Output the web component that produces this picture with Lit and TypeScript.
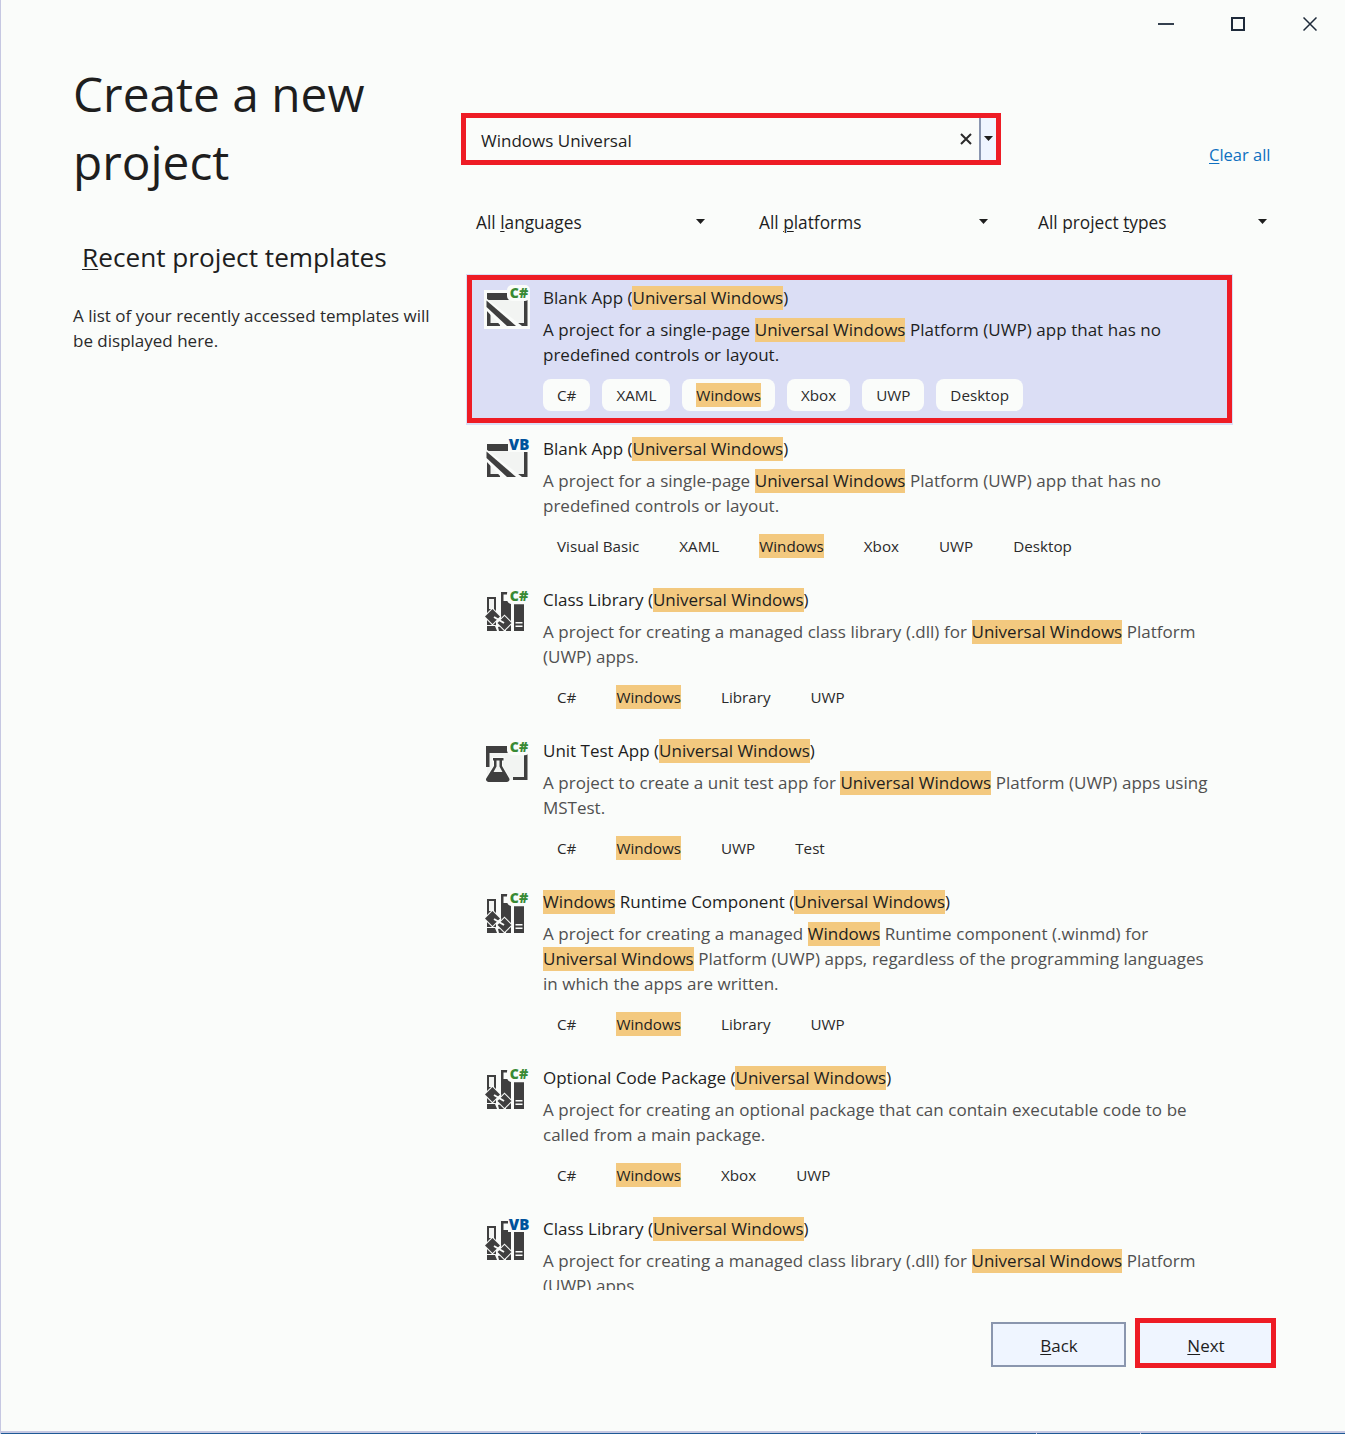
import { LitElement, html, svg, css } from 'lit';
import { customElement } from 'lit/decorators.js';

interface Template {
  icon: 'blank' | 'lib' | 'test';
  lang: 'C#' | 'VB';
  title: string;
  desc: string[];
  tags: string[];
  selected?: boolean;
}

// [[...]] marks the search hit in a string
const templates: Template[] = [
  {
    icon: 'blank',
    lang: 'C#',
    selected: true,
    title: 'Blank App ([[Universal Windows]])',
    desc: [
      'A project for a single-page [[Universal Windows]] Platform (UWP) app that has no',
      'predefined controls or layout.',
    ],
    tags: ['C#', 'XAML', '[[Windows]]', 'Xbox', 'UWP', 'Desktop'],
  },
  {
    icon: 'blank',
    lang: 'VB',
    title: 'Blank App ([[Universal Windows]])',
    desc: [
      'A project for a single-page [[Universal Windows]] Platform (UWP) app that has no',
      'predefined controls or layout.',
    ],
    tags: ['Visual Basic', 'XAML', '[[Windows]]', 'Xbox', 'UWP', 'Desktop'],
  },
  {
    icon: 'lib',
    lang: 'C#',
    title: 'Class Library ([[Universal Windows]])',
    desc: [
      'A project for creating a managed class library (.dll) for [[Universal Windows]] Platform',
      '(UWP) apps.',
    ],
    tags: ['C#', '[[Windows]]', 'Library', 'UWP'],
  },
  {
    icon: 'test',
    lang: 'C#',
    title: 'Unit Test App ([[Universal Windows]])',
    desc: [
      'A project to create a unit test app for [[Universal Windows]] Platform (UWP) apps using',
      'MSTest.',
    ],
    tags: ['C#', '[[Windows]]', 'UWP', 'Test'],
  },
  {
    icon: 'lib',
    lang: 'C#',
    title: '[[Windows]] Runtime Component ([[Universal Windows]])',
    desc: [
      'A project for creating a managed [[Windows]] Runtime component (.winmd) for',
      '[[Universal Windows]] Platform (UWP) apps, regardless of the programming languages',
      'in which the apps are written.',
    ],
    tags: ['C#', '[[Windows]]', 'Library', 'UWP'],
  },
  {
    icon: 'lib',
    lang: 'C#',
    title: 'Optional Code Package ([[Universal Windows]])',
    desc: [
      'A project for creating an optional package that can contain executable code to be',
      'called from a main package.',
    ],
    tags: ['C#', '[[Windows]]', 'Xbox', 'UWP'],
  },
  {
    icon: 'lib',
    lang: 'VB',
    title: 'Class Library ([[Universal Windows]])',
    desc: [
      'A project for creating a managed class library (.dll) for [[Universal Windows]] Platform',
      '(UWP) apps.',
    ],
    tags: ['C#', '[[Windows]]', 'Library', 'UWP'],
  },
];

const hits = (text: string) =>
  text
    .split(/(\[\[.*?\]\])/)
    .map(part =>
      part.startsWith('[[')
        ? html`<span class="hit">${part.slice(2, -2)}</span>`
        : part,
    );

const DARK = '#3f3f3f';
const PAGE = '#fafcfa';
const LIGHT = '#f2f4f2';

const badge = (lang: string, baseline: number) => svg`
  ${lang === 'C#'
    ? svg`<rect x="23" y=${baseline - 12.5} width="23" height="16" rx="5" fill=${PAGE} />`
    : svg`<rect x="24" y="-1" width="22" height="14" fill=${PAGE} />`}
  <text
    x="35"
    y=${baseline}
    text-anchor="middle"
    font-family="Open Sans, sans-serif"
    font-weight="800"
    font-size=${lang === 'C#' ? 14 : 15}
    fill=${lang === 'C#' ? '#388a34' : '#00539c'}
  >${lang}</text>
`;

const blankIcon = (lang: string, selected: boolean) => svg`
  <svg class="icon" viewBox="0 -6 46 48" width="46" height="48">
    ${selected ? svg`<rect x="0" y="2" width="46" height="39" fill=${PAGE} />` : ''}
    <rect x="3" y="5" width="40" height="33" fill=${LIGHT} />
    <rect x="3" y="5" width="37" height="7" fill=${DARK} />
    <path d="M40 10h3.500v28H33v-3h7z" fill=${DARK} />
    <path d="M3 18h3.500v17H16v3H3z" fill=${DARK} />
    <path d="M2 10L38 38H17L2 22z" fill=${PAGE} />
    <path d="M2.500 12.500L32 38H23L2.500 19z" fill=${DARK} />
    ${badge(lang, lang === 'C#' ? 9.500 : 11)}
  </svg>
`;

const libIcon = (lang: string) => svg`
  <svg class="icon" viewBox="0 -6 46 48" width="46" height="48">
    <path d="M3 7h9v34H3z" fill=${DARK} />
    <rect x="5" y="9" width="5" height="10" fill=${LIGHT} />
    <path d="M17 2h9v2.500h-6.500V11H27v30H17z" fill=${DARK} />
    <path d="M30 13h10v28H30z" fill=${DARK} />
    <rect x="31.500" y="32" width="7" height="1.500" fill=${PAGE} />
    <rect x="31.500" y="35.500" width="7" height="1.500" fill=${PAGE} />
    <g stroke=${PAGE} stroke-width="2" paint-order="stroke" fill=${DARK}>
      <path d="M3 36h8l2 5H3z" />
      <path d="M14 37l4 -1 3 5h-6z" />
      <path d="M8.500 19l7.500 7.500 -7.500 7.500 -7.500 -7.500z" />
      <path d="M20.500 26l7 7 -7 7 -7 -7z" />
    </g>
    <path d="M10 27l10 6" stroke=${PAGE} stroke-width="2" />
    ${badge(lang, 10.700)}
  </svg>
`;

const testIcon = (lang: string) => svg`
  <svg class="icon" viewBox="0 -6 46 48" width="46" height="48">
    <rect x="3" y="5" width="40" height="34" fill=${LIGHT} />
    <rect x="2" y="5" width="38" height="7" fill=${DARK} />
    <path d="M40 10h3.500v29H29v-3h11z" fill=${DARK} />
    <rect x="2" y="12" width="3.500" height="14" fill=${DARK} />
    <path
      d="M9 17h10.500v2.500h-1.500v5.500L25 37a2.500 2.500 0 0 1-2 4H4.500a2.500 2.500 0 0 1-2-4L10 25v-5.500H9z"
      fill=${DARK}
      stroke=${PAGE}
      stroke-width="2"
      paint-order="stroke"
    />
    <path d="M12.500 19.500h3v6l3 5.500H9.500l3-5.500z" fill=${LIGHT} />
    ${badge(lang, 10.700)}
  </svg>
`;

const caret = svg`
  <svg class="caret" viewBox="0 0 9 5" width="9" height="5"><path d="M0 0h9L4.500 5z" fill="#1e1e1e" /></svg>
`;

@customElement('app-root')
export class AppRoot extends LitElement {
  static styles = css`
    :host {
      display: block;
      font-family: 'Open Sans', 'Noto Sans', sans-serif;
      color: #1e1e1e;
    }
    .window {
      width: 1345px;
      height: 1434px;
      box-sizing: border-box;
      display: flex;
      flex-direction: column;
      background: #fafcfa;
      border-left: 1px solid #c6c8e2;
      overflow: hidden;
    }
    .titlebar {
      height: 48px;
      flex: none;
      display: flex;
      justify-content: flex-end;
      gap: 2px;
    }
    .winbtn {
      width: 70px;
      height: 48px;
      display: flex;
      align-items: center;
      justify-content: center;
    }
    .body {
      flex: 1;
      display: grid;
      grid-template-columns: 460px 1fr;
      min-height: 0;
    }
    aside {
      padding-left: 72px;
    }
    h1 {
      margin: 12px 0 0;
      font-size: 47.800px;
      font-weight: 400;
      line-height: 68px;
    }
    h2 {
      margin: 44px 0 0 9px;
      font-size: 26.200px;
      font-weight: 400;
      line-height: 34px;
      white-space: nowrap;
    }
    .recent {
      margin: 29px 0 0;
      font-size: 17px;
      line-height: 25px;
      white-space: nowrap;
      color: #2a2a2a;
    }
    main {
      min-width: 0;
    }
    .search-row {
      margin-top: 65px;
      height: 52px;
      display: flex;
      align-items: flex-start;
    }
    .search {
      width: 540px;
      height: 52px;
      box-sizing: border-box;
      border: 5px solid #ee1c25;
      display: flex;
      align-items: center;
      font-size: 17px;
    }
    .search-text {
      flex: 1;
      padding: 3px 0 0 15px;
      white-space: nowrap;
    }
    .clear {
      width: 26px;
      display: flex;
      justify-content: center;
    }
    .search-drop {
      width: 15px;
      height: 100%;
      border-left: 2px solid #8a96b0;
      background: #eff5ff;
      display: flex;
      align-items: center;
      justify-content: center;
    }
    .clear-all {
      margin: 30px 0 0 208px;
      font-size: 16.500px;
      line-height: 24px;
      color: #0e70c0;
      white-space: nowrap;
    }
    .filters {
      margin-top: 33px;
      display: flex;
      gap: 38px;
      padding-left: 4px;
      height: 47px;
    }
    .filter {
      width: 245px;
      box-sizing: border-box;
      padding: 1px 5px 0 11px;
      display: flex;
      align-items: center;
      justify-content: space-between;
      font-size: 17.300px;
      white-space: nowrap;
    }
    .filter + .filter + .filter {
      margin-left: -4px;
    }
    .caret {
      flex: none;
      margin-bottom: 2px;
    }
    .list {
      margin: 29px 0 0 5px;
      width: 767px;
      height: 1016px;
      overflow: hidden;
    }
    .row {
      position: relative;
      display: flex;
      gap: 13px;
      padding: 11px 0 14px 18px;
    }
    .row.selected {
      background: #dbdef5;
    }
    .row.selected::after {
      content: '';
      position: absolute;
      inset: 1px 1px 2px;
      border: 5px solid #ee1c25;
      pointer-events: none;
    }
    .icon {
      display: block;
      flex: none;
      margin-top: -3px;
    }
    .info {
      min-width: 0;
      font-size: 17px;
      line-height: 25px;
      white-space: nowrap;
    }
    .title {
      color: #1e1e1e;
    }
    .desc {
      margin-top: 7px;
      color: #505050;
      word-spacing: 0.200px;
    }
    .selected .desc {
      color: #1e1e1e;
    }
    .hit {
      display: inline-block;
      background: #f3c97f;
      line-height: 24px;
      color: #1e1e1e;
      word-spacing: 0;
    }
    .tags {
      margin-top: 12px;
      display: flex;
      gap: 12px;
    }
    .tag {
      height: 32px;
      padding: 0 14px;
      display: flex;
      align-items: center;
      border-radius: 8px;
      font-size: 15.200px;
      color: #2a2a2a;
    }
    .selected .tag {
      background: #fafcfa;
    }
    .actions {
      margin-top: 28px;
      padding-right: 69px;
      display: flex;
      justify-content: flex-end;
      align-items: flex-start;
      gap: 9px;
    }
    .btn {
      box-sizing: border-box;
      display: flex;
      align-items: center;
      justify-content: center;
      padding-top: 1px;
      background: #eff5ff;
      font-size: 17px;
    }
    .back {
      width: 135px;
      height: 45px;
      margin-top: 4px;
      padding-left: 1px;
      border: 2px solid #8a96ae;
    }
    .next {
      width: 141px;
      height: 50px;
      padding-top: 4px;
      padding-left: 1px;
      border: 5px solid #ee1c25;
    }
    .status {
      flex: none;
      height: 3px;
      display: flex;
      gap: 1px;
      background: #c6c8e2;
      align-items: flex-end;
    }
    .status span {
      height: 1px;
      background: #1e5a96;
    }
    .status span:first-child {
      width: 1035px;
    }
    .status span:nth-child(2) {
      width: 103px;
    }
    .status span:last-child {
      flex: 1;
    }
    u {
      text-underline-offset: 2px;
      text-decoration-thickness: 1px;
    }
  `;

  private renderIcon(t: Template) {
    if (t.icon === 'lib') return libIcon(t.lang);
    if (t.icon === 'test') return testIcon(t.lang);
    return blankIcon(t.lang, !!t.selected);
  }

  render() {
    return html`
      <div class="window">
        <div class="titlebar">
          <div class="winbtn">
            <svg width="16" height="2"><rect width="16" height="2" fill="#34404e" /></svg>
          </div>
          <div class="winbtn">
            <svg width="14" height="14">
              <rect x="1" y="1" width="12" height="12" fill="none" stroke="#1e2a3a" stroke-width="2" />
            </svg>
          </div>
          <div class="winbtn">
            <svg width="14" height="14">
              <path d="M0.500 0.500L13.500 13.500M13.500 0.500L0.500 13.500" stroke="#1e2a3a" stroke-width="1.500" />
            </svg>
          </div>
        </div>
        <div class="body">
          <aside>
            <h1>Create a new<br />project</h1>
            <h2><u>R</u>ecent project templates</h2>
            <p class="recent">
              A list of your recently accessed templates will<br />be displayed here.
            </p>
          </aside>
          <main>
            <div class="search-row">
              <div class="search">
                <span class="search-text">Windows Universal</span>
                <span class="clear">
                  <svg width="12" height="12">
                    <path d="M1 1L11 11M11 1L1 11" stroke="#2a2a2a" stroke-width="2" />
                  </svg>
                </span>
                <span class="search-drop">${caret}</span>
              </div>
              <span class="clear-all"><u>C</u>lear all</span>
            </div>
            <div class="filters">
              <div class="filter"><span>All <u>l</u>anguages</span>${caret}</div>
              <div class="filter"><span>All <u>p</u>latforms</span>${caret}</div>
              <div class="filter"><span>All project <u>t</u>ypes</span>${caret}</div>
            </div>
            <div class="list">
              ${templates.map(
                t => html`
                  <div class="row ${t.selected ? 'selected' : ''}">
                    ${this.renderIcon(t)}
                    <div class="info">
                      <div class="title">${hits(t.title)}</div>
                      <div class="desc">${t.desc.map(line => html`<div>${hits(line)}</div>`)}</div>
                      <div class="tags">
                        ${t.tags.map(tag => html`<span class="tag">${hits(tag)}</span>`)}
                      </div>
                    </div>
                  </div>
                `,
              )}
            </div>
            <div class="actions">
              <div class="btn back"><span><u>B</u>ack</span></div>
              <div class="btn next"><span><u>N</u>ext</span></div>
            </div>
          </main>
        </div>
        <div class="status"><span></span><span></span><span></span></div>
      </div>
    `;
  }
}
